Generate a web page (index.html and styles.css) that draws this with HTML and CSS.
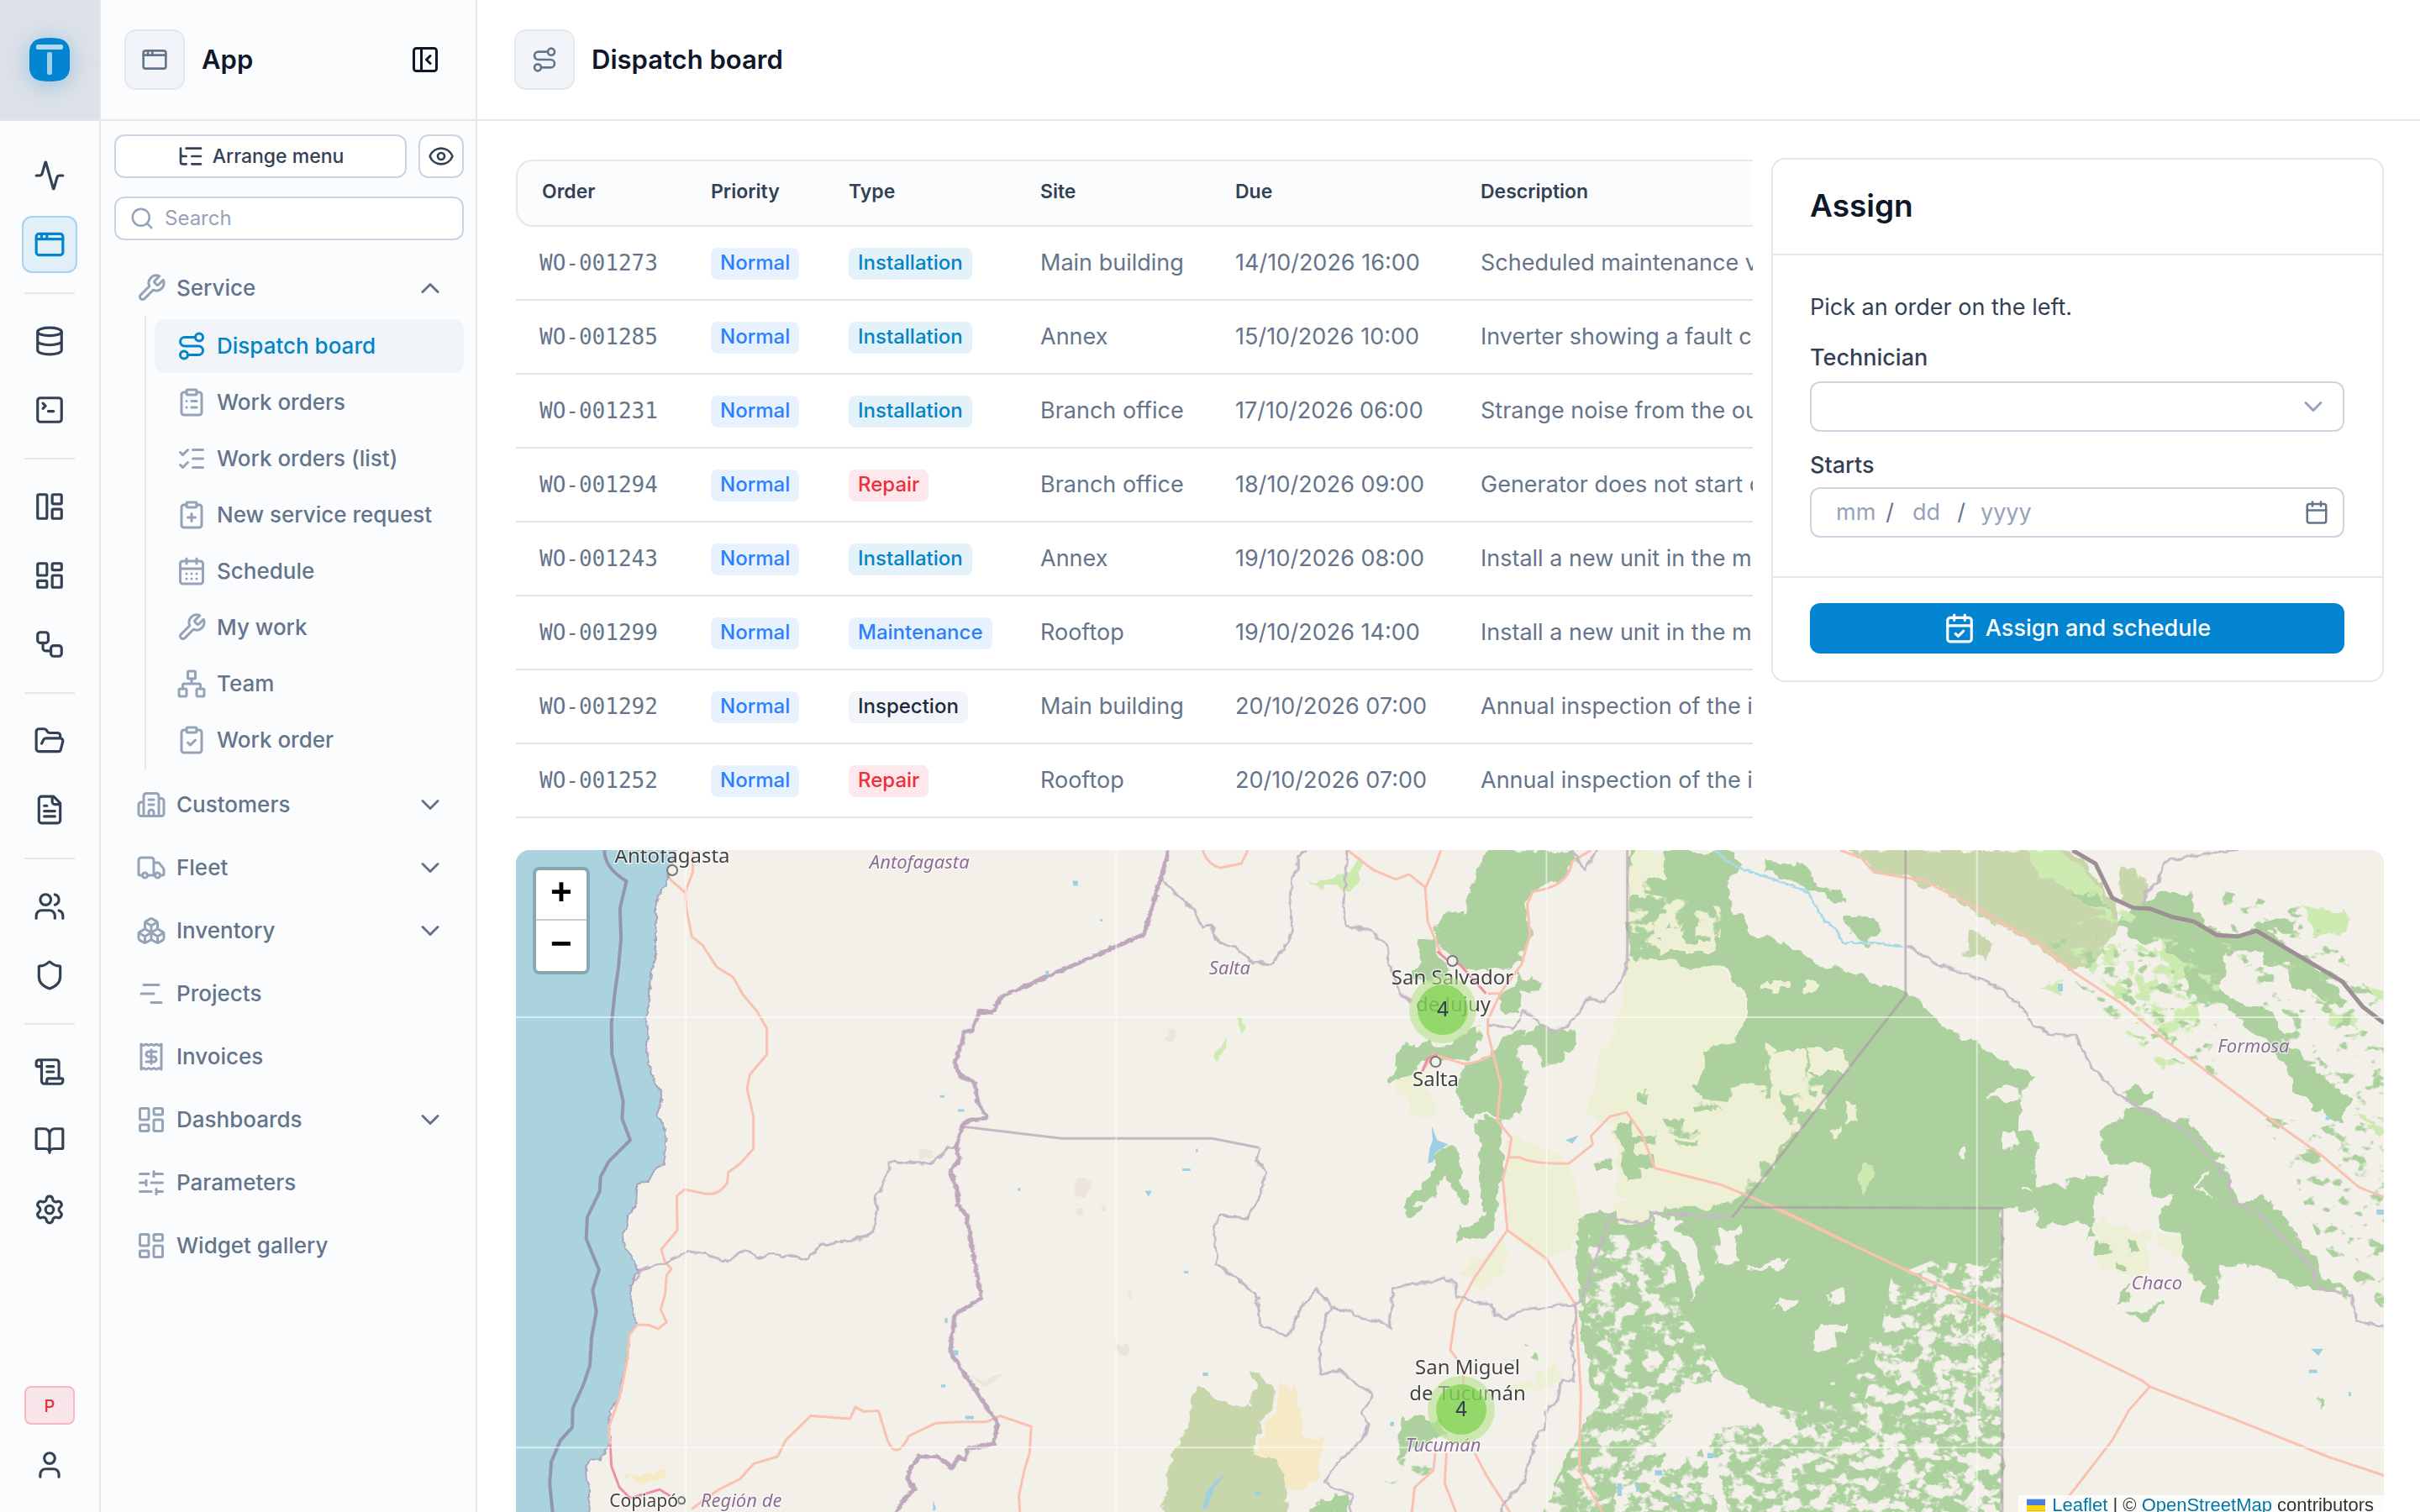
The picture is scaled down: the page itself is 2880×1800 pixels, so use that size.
FILE: index.html
```html
<!DOCTYPE html>
<html lang="en">
<head>
<meta charset="utf-8">
<title>Dispatch board</title>
<link rel="stylesheet" href="styles.css">
</head>
<body>
<svg class="sprite" aria-hidden="true">
  <symbol id="activity" viewBox="0 0 24 24"><path d="M22 12h-2.48a2 2 0 0 0-1.93 1.46l-2.35 8.36a.25.25 0 0 1-.48 0L9.24 2.18a.25.25 0 0 0-.48 0l-2.35 8.36A2 2 0 0 1 4.49 12H2"/></symbol>
  <symbol id="app" viewBox="0 0 24 24"><rect x="2" y="4" width="20" height="16" rx="2"/><path d="M10 4v4M2 8h20M6 4v4"/></symbol>
  <symbol id="database" viewBox="0 0 24 24"><ellipse cx="12" cy="5" rx="9" ry="3"/><path d="M3 5v14a9 3 0 0 0 18 0V5M3 12a9 3 0 0 0 18 0"/></symbol>
  <symbol id="terminal" viewBox="0 0 24 24"><path d="m7 11 2-2-2-2M11 13h4"/><rect x="3" y="3" width="18" height="18" rx="2"/></symbol>
  <symbol id="panels" viewBox="0 0 24 24"><rect x="3" y="3" width="7" height="18" rx="1"/><rect x="14" y="3" width="7" height="7" rx="1"/><rect x="14" y="14" width="7" height="7" rx="1"/></symbol>
  <symbol id="dashboard" viewBox="0 0 24 24"><rect x="3" y="3" width="7" height="9" rx="1"/><rect x="14" y="3" width="7" height="5" rx="1"/><rect x="14" y="12" width="7" height="9" rx="1"/><rect x="3" y="16" width="7" height="5" rx="1"/></symbol>
  <symbol id="workflow" viewBox="0 0 24 24"><rect x="3" y="3" width="8" height="8" rx="2"/><path d="M7 11v4a2 2 0 0 0 2 2h4"/><rect x="13" y="13" width="8" height="8" rx="2"/></symbol>
  <symbol id="folder" viewBox="0 0 24 24"><path d="m6 14 1.500-2.900A2 2 0 0 1 9.240 10H20a2 2 0 0 1 1.940 2.500l-1.540 6a2 2 0 0 1-1.950 1.500H4a2 2 0 0 1-2-2V5a2 2 0 0 1 2-2h3.900a2 2 0 0 1 1.690.9l.81 1.200a2 2 0 0 0 1.670.9H18a2 2 0 0 1 2 2v2"/></symbol>
  <symbol id="file" viewBox="0 0 24 24"><path d="M15 2H6a2 2 0 0 0-2 2v16a2 2 0 0 0 2 2h12a2 2 0 0 0 2-2V7ZM14 2v4a2 2 0 0 0 2 2h4M10 9H8M16 13H8M16 17H8"/></symbol>
  <symbol id="users" viewBox="0 0 24 24"><path d="M16 21v-2a4 4 0 0 0-4-4H6a4 4 0 0 0-4 4v2M22 21v-2a4 4 0 0 0-3-3.870M16 3.130a4 4 0 0 1 0 7.750"/><circle cx="9" cy="7" r="4"/></symbol>
  <symbol id="shield" viewBox="0 0 24 24"><path d="M20 13c0 5-3.500 7.500-7.660 8.950a1 1 0 0 1-.67-.01C7.500 20.500 4 18 4 13V6a1 1 0 0 1 1-1c2 0 4.500-1.200 6.240-2.720a1.170 1.170 0 0 1 1.520 0C14.510 3.810 17 5 19 5a1 1 0 0 1 1 1z"/></symbol>
  <symbol id="scroll" viewBox="0 0 24 24"><path d="M15 12h-5M15 8h-5M19 17V5a2 2 0 0 0-2-2H4M8 21h12a2 2 0 0 0 2-2v-1a1 1 0 0 0-1-1H11a1 1 0 0 0-1 1v1a2 2 0 1 1-4 0V5a2 2 0 1 0-4 0v2a1 1 0 0 0 1 1h3"/></symbol>
  <symbol id="book" viewBox="0 0 24 24"><path d="M12 7v14M3 18a1 1 0 0 1-1-1V4a1 1 0 0 1 1-1h5a4 4 0 0 1 4 4 4 4 0 0 1 4-4h5a1 1 0 0 1 1 1v13a1 1 0 0 1-1 1h-6a3 3 0 0 0-3 3 3 3 0 0 0-3-3z"/></symbol>
  <symbol id="settings" viewBox="0 0 24 24"><path d="M9.671 4.136a2.340 2.340 0 0 1 4.659 0 2.340 2.340 0 0 0 3.319 1.915 2.340 2.340 0 0 1 2.330 4.033 2.340 2.340 0 0 0 0 3.831 2.340 2.340 0 0 1-2.330 4.033 2.340 2.340 0 0 0-3.319 1.915 2.340 2.340 0 0 1-4.659 0 2.340 2.340 0 0 0-3.320-1.915 2.340 2.340 0 0 1-2.330-4.033 2.340 2.340 0 0 0 0-3.831A2.340 2.340 0 0 1 6.350 6.051a2.340 2.340 0 0 0 3.319-1.915"/><circle cx="12" cy="12" r="3"/></symbol>
  <symbol id="user" viewBox="0 0 24 24"><path d="M19 21v-2a4 4 0 0 0-4-4H9a4 4 0 0 0-4 4v2"/><circle cx="12" cy="7" r="4"/></symbol>
  <symbol id="collapse" viewBox="0 0 24 24"><rect x="3" y="3" width="18" height="18" rx="2"/><path d="M9 3v18M16 15l-3-3 3-3"/></symbol>
  <symbol id="tree" viewBox="0 0 24 24"><path d="M8 5h13M13 12h8M13 19h8M3 10a2 2 0 0 0 2 2h3M3 5v12a2 2 0 0 0 2 2h3"/></symbol>
  <symbol id="eye" viewBox="0 0 24 24"><path d="M2.062 12.348a1 1 0 0 1 0-.696 10.750 10.750 0 0 1 19.876 0 1 1 0 0 1 0 .696 10.750 10.750 0 0 1-19.876 0"/><circle cx="12" cy="12" r="3"/></symbol>
  <symbol id="search" viewBox="0 0 24 24"><circle cx="11" cy="11" r="8"/><path d="m21 21-4.300-4.300"/></symbol>
  <symbol id="wrench" viewBox="0 0 24 24"><path d="M14.700 6.300a1 1 0 0 0 0 1.400l1.600 1.600a1 1 0 0 0 1.400 0l3.770-3.770a6 6 0 0 1-7.940 7.940l-6.910 6.910a2.120 2.120 0 0 1-3-3l6.910-6.910a6 6 0 0 1 7.940-7.940l-3.760 3.760z"/></symbol>
  <symbol id="route" viewBox="0 0 24 24"><circle cx="6" cy="19" r="3"/><path d="M9 19h8.500a3.500 3.500 0 0 0 0-7h-11a3.500 3.500 0 0 1 0-7H15"/><circle cx="18" cy="5" r="3"/></symbol>
  <symbol id="clip" viewBox="0 0 24 24"><rect x="8" y="2" width="8" height="4" rx="1"/><path d="M16 4h2a2 2 0 0 1 2 2v14a2 2 0 0 1-2 2H6a2 2 0 0 1-2-2V6a2 2 0 0 1 2-2h2"/></symbol>
  <symbol id="clip-list" viewBox="0 0 24 24"><use href="#clip"/><path d="M12 11h4M12 16h4M8 11h.01M8 16h.01"/></symbol>
  <symbol id="clip-plus" viewBox="0 0 24 24"><use href="#clip"/><path d="M9 14h6M12 17v-6"/></symbol>
  <symbol id="clip-check" viewBox="0 0 24 24"><use href="#clip"/><path d="m9 14 2 2 4-4"/></symbol>
  <symbol id="checks" viewBox="0 0 24 24"><path d="M13 5h8M13 12h8M13 19h8M3 17l2 2 4-4M3 7l2 2 4-4"/></symbol>
  <symbol id="calendar" viewBox="0 0 24 24"><path d="M8 2v4M16 2v4M3 10h18"/><rect x="3" y="4" width="18" height="18" rx="2"/></symbol>
  <symbol id="cal-days" viewBox="0 0 24 24"><use href="#calendar"/><path d="M8 14h.01M12 14h.01M16 14h.01M8 18h.01M12 18h.01M16 18h.01"/></symbol>
  <symbol id="cal-check" viewBox="0 0 24 24"><use href="#calendar"/><path d="m9 16 2 2 4-4"/></symbol>
  <symbol id="network" viewBox="0 0 24 24"><rect x="16" y="16" width="6" height="6" rx="1"/><rect x="2" y="16" width="6" height="6" rx="1"/><rect x="9" y="2" width="6" height="6" rx="1"/><path d="M5 16v-3a1 1 0 0 1 1-1h12a1 1 0 0 1 1 1v3M12 12V8"/></symbol>
  <symbol id="building" viewBox="0 0 24 24"><path d="M10 12h4M10 8h4M14 21v-3a2 2 0 0 0-4 0v3M6 10H4a2 2 0 0 0-2 2v7a2 2 0 0 0 2 2h16a2 2 0 0 0 2-2V9a2 2 0 0 0-2-2h-2M6 21V5a2 2 0 0 1 2-2h8a2 2 0 0 1 2 2v16"/></symbol>
  <symbol id="truck" viewBox="0 0 24 24"><path d="M14 18V6a2 2 0 0 0-2-2H4a2 2 0 0 0-2 2v11a1 1 0 0 0 1 1h2M15 18H9M19 18h2a1 1 0 0 0 1-1v-3.650a1 1 0 0 0-.22-.624l-3.480-4.350A1 1 0 0 0 17.520 8H14"/><circle cx="17" cy="18" r="2"/><circle cx="7" cy="18" r="2"/></symbol>
  <symbol id="boxes" viewBox="0 0 24 24"><path d="M2.970 12.920A2 2 0 0 0 2 14.630v3.240a2 2 0 0 0 .97 1.710l3 1.800a2 2 0 0 0 2.060 0L12 19v-5.500l-5-3-4.030 2.420ZM7 16.500l-4.740-2.850M7 16.500l5-3M7 16.500v5.170M12 13.500V19l3.970 2.380a2 2 0 0 0 2.060 0l3-1.800a2 2 0 0 0 .97-1.710v-3.240a2 2 0 0 0-.97-1.710L17 10.500l-5 3ZM17 16.500l-5-3M17 16.500l4.740-2.850M17 16.500v5.170M7.970 4.420A2 2 0 0 0 7 6.130v4.370l5 3 5-3V6.130a2 2 0 0 0-.97-1.710l-3-1.800a2 2 0 0 0-2.060 0l-3 1.800ZM12 8 7.260 5.150M12 8l4.740-2.850M12 13.500V8"/></symbol>
  <symbol id="gantt" viewBox="0 0 24 24"><path d="M6 5h12M4 12h10M12 19h8"/></symbol>
  <symbol id="receipt" viewBox="0 0 24 24"><path d="M4 2v20l2-1 2 1 2-1 2 1 2-1 2 1 2-1 2 1V2l-2 1-2-1-2 1-2-1-2 1-2-1-2 1ZM16 8h-6a2 2 0 1 0 0 4h4a2 2 0 1 1 0 4H8M12 17.500v-11"/></symbol>
  <symbol id="sliders" viewBox="0 0 24 24"><path d="M10 5H3M12 19H3M14 3v4M16 17v4M21 12h-9M21 19h-5M21 5h-7M8 10v4M8 12H3"/></symbol>
  <symbol id="down" viewBox="0 0 24 24"><path d="m6 9 6 6 6-6"/></symbol>
  <symbol id="up" viewBox="0 0 24 24"><path d="m6 15 6-6 6 6"/></symbol>
</svg>

<div class="shell">
  <nav class="rail" aria-label="Sections">
    <a class="brand" href="#" aria-label="Home">
      <svg viewBox="0 0 48 52" aria-hidden="true"><path class="brand-body" d="M0 14C0 4 8 0 24 0s24 4 24 14v24c0 10-8 14-24 14S0 48 0 38z"/><rect class="brand-bar" x="8" y="8" width="32" height="6" rx="2"/><rect class="brand-stem" x="21" y="17" width="6" height="27" rx="2"/></svg>
    </a>
    <div class="rail-items">
      <a class="rail-link" href="#" aria-label="Activity"><svg class="icon"><use href="#activity"/></svg></a>
      <a class="rail-link active" href="#" aria-label="App"><svg class="icon"><use href="#app"/></svg></a>
      <hr>
      <a class="rail-link" href="#" aria-label="Data"><svg class="icon"><use href="#database"/></svg></a>
      <a class="rail-link" href="#" aria-label="Console"><svg class="icon"><use href="#terminal"/></svg></a>
      <hr>
      <a class="rail-link" href="#" aria-label="Pages"><svg class="icon"><use href="#panels"/></svg></a>
      <a class="rail-link" href="#" aria-label="Dashboards"><svg class="icon"><use href="#dashboard"/></svg></a>
      <a class="rail-link" href="#" aria-label="Workflows"><svg class="icon"><use href="#workflow"/></svg></a>
      <hr>
      <a class="rail-link" href="#" aria-label="Files"><svg class="icon"><use href="#folder"/></svg></a>
      <a class="rail-link" href="#" aria-label="Documents"><svg class="icon"><use href="#file"/></svg></a>
      <hr>
      <a class="rail-link" href="#" aria-label="Users"><svg class="icon"><use href="#users"/></svg></a>
      <a class="rail-link" href="#" aria-label="Security"><svg class="icon"><use href="#shield"/></svg></a>
      <hr>
      <a class="rail-link" href="#" aria-label="Logs"><svg class="icon"><use href="#scroll"/></svg></a>
      <a class="rail-link" href="#" aria-label="Docs"><svg class="icon"><use href="#book"/></svg></a>
      <a class="rail-link" href="#" aria-label="Settings"><svg class="icon"><use href="#settings"/></svg></a>
    </div>
    <div class="rail-foot">
      <span class="env">P</span>
      <a class="rail-link" href="#" aria-label="Account"><svg class="icon"><use href="#user"/></svg></a>
    </div>
  </nav>

  <aside class="sidebar">
    <header class="side-head">
      <span class="tile"><svg class="icon"><use href="#app"/></svg></span>
      <h2>App</h2>
      <button class="bare" type="button" aria-label="Collapse"><svg class="icon"><use href="#collapse"/></svg></button>
    </header>
    <div class="tools">
      <button class="tool wide" type="button"><svg class="icon"><use href="#tree"/></svg>Arrange menu</button>
      <button class="tool" type="button" aria-label="Preview"><svg class="icon"><use href="#eye"/></svg></button>
    </div>
    <label class="search"><svg class="icon"><use href="#search"/></svg><input type="search" placeholder="Search" aria-label="Search"></label>
    <ul class="menu">
      <li><a class="item" href="#"><svg class="icon"><use href="#wrench"/></svg><span>Service</span><svg class="icon chev"><use href="#up"/></svg></a>
        <ul class="submenu">
          <li><a class="item current" href="#"><svg class="icon"><use href="#route"/></svg><span>Dispatch board</span></a></li>
          <li><a class="item" href="#"><svg class="icon"><use href="#clip-list"/></svg><span>Work orders</span></a></li>
          <li><a class="item" href="#"><svg class="icon"><use href="#checks"/></svg><span>Work orders (list)</span></a></li>
          <li><a class="item" href="#"><svg class="icon"><use href="#clip-plus"/></svg><span>New service request</span></a></li>
          <li><a class="item" href="#"><svg class="icon"><use href="#cal-days"/></svg><span>Schedule</span></a></li>
          <li><a class="item" href="#"><svg class="icon"><use href="#wrench"/></svg><span>My work</span></a></li>
          <li><a class="item" href="#"><svg class="icon"><use href="#network"/></svg><span>Team</span></a></li>
          <li><a class="item" href="#"><svg class="icon"><use href="#clip-check"/></svg><span>Work order</span></a></li>
        </ul>
      </li>
      <li><a class="item" href="#"><svg class="icon"><use href="#building"/></svg><span>Customers</span><svg class="icon chev"><use href="#down"/></svg></a></li>
      <li><a class="item" href="#"><svg class="icon"><use href="#truck"/></svg><span>Fleet</span><svg class="icon chev"><use href="#down"/></svg></a></li>
      <li><a class="item" href="#"><svg class="icon"><use href="#boxes"/></svg><span>Inventory</span><svg class="icon chev"><use href="#down"/></svg></a></li>
      <li><a class="item" href="#"><svg class="icon"><use href="#gantt"/></svg><span>Projects</span></a></li>
      <li><a class="item" href="#"><svg class="icon"><use href="#receipt"/></svg><span>Invoices</span></a></li>
      <li><a class="item" href="#"><svg class="icon"><use href="#dashboard"/></svg><span>Dashboards</span><svg class="icon chev"><use href="#down"/></svg></a></li>
      <li><a class="item" href="#"><svg class="icon"><use href="#sliders"/></svg><span>Parameters</span></a></li>
      <li><a class="item" href="#"><svg class="icon"><use href="#dashboard"/></svg><span>Widget gallery</span></a></li>
    </ul>
  </aside>

  <main class="main">
    <header class="page-head">
      <span class="tile"><svg class="icon"><use href="#route"/></svg></span>
      <h1>Dispatch board</h1>
    </header>
    <div class="content">
      <div class="board">
        <div class="orders">
          <table>
            <colgroup><col class="c-order"><col class="c-priority"><col class="c-type"><col class="c-site"><col class="c-due"><col class="c-desc"></colgroup>
            <thead><tr><th>Order</th><th>Priority</th><th>Type</th><th>Site</th><th>Due</th><th>Description</th></tr></thead>
            <tbody>
              <tr><td class="mono">WO-001273</td><td><span class="badge blue">Normal</span></td><td><span class="badge sky">Installation</span></td><td>Main building</td><td>14/10/2026 16:00</td><td>Scheduled maintenance visit for the unit</td></tr>
              <tr><td class="mono">WO-001285</td><td><span class="badge blue">Normal</span></td><td><span class="badge sky">Installation</span></td><td>Annex</td><td>15/10/2026 10:00</td><td>Inverter showing a fault code on the panel</td></tr>
              <tr><td class="mono">WO-001231</td><td><span class="badge blue">Normal</span></td><td><span class="badge sky">Installation</span></td><td>Branch office</td><td>17/10/2026 06:00</td><td>Strange noise from the outdoor unit</td></tr>
              <tr><td class="mono">WO-001294</td><td><span class="badge blue">Normal</span></td><td><span class="badge red">Repair</span></td><td>Branch office</td><td>18/10/2026 09:00</td><td>Generator does not start on demand</td></tr>
              <tr><td class="mono">WO-001243</td><td><span class="badge blue">Normal</span></td><td><span class="badge sky">Installation</span></td><td>Annex</td><td>19/10/2026 08:00</td><td>Install a new unit in the meeting room</td></tr>
              <tr><td class="mono">WO-001299</td><td><span class="badge blue">Normal</span></td><td><span class="badge blue">Maintenance</span></td><td>Rooftop</td><td>19/10/2026 14:00</td><td>Install a new unit in the meeting room</td></tr>
              <tr><td class="mono">WO-001292</td><td><span class="badge blue">Normal</span></td><td><span class="badge gray">Inspection</span></td><td>Main building</td><td>20/10/2026 07:00</td><td>Annual inspection of the installation</td></tr>
              <tr><td class="mono">WO-001252</td><td><span class="badge blue">Normal</span></td><td><span class="badge red">Repair</span></td><td>Rooftop</td><td>20/10/2026 07:00</td><td>Annual inspection of the installation</td></tr>
            </tbody>
          </table>
        </div>
        <form class="card">
          <h2>Assign</h2>
          <div class="card-body">
            <p>Pick an order on the left.</p>
            <label for="tech">Technician</label>
            <div class="field"><select id="tech"><option></option></select><svg class="icon"><use href="#down"/></svg></div>
            <label for="month">Starts</label>
            <div class="field date">
              <input id="month" class="mm" placeholder="mm"><span>/</span><input class="dd" placeholder="dd" aria-label="Day"><span>/</span><input class="yyyy" placeholder="yyyy" aria-label="Year">
              <button class="bare" type="button" aria-label="Open calendar"><svg class="icon"><use href="#calendar"/></svg></button>
            </div>
          </div>
          <div class="card-foot"><button class="primary" type="button"><svg class="icon"><use href="#cal-check"/></svg>Assign and schedule</button></div>
        </form>
      </div>

      <section class="map" aria-label="Map">
        <svg class="tiles" viewBox="614 1012 2222 800" preserveAspectRatio="xMinYMin slice">
          <defs>
            <filter id="ragged" x="0" y="0" width="100%" height="100%"><feTurbulence type="fractalNoise" baseFrequency=".05" numOctaves="3" seed="4"/><feDisplacementMap in="SourceGraphic" scale="20" xChannelSelector="R" yChannelSelector="G"/></filter>
            <filter id="wobble" x="0" y="0" width="100%" height="100%"><feTurbulence type="fractalNoise" baseFrequency=".08" numOctaves="2" seed="9"/><feDisplacementMap in="SourceGraphic" scale="9" xChannelSelector="R" yChannelSelector="G"/></filter>
            <filter id="speckle" x="0" y="0" width="100%" height="100%"><feTurbulence type="fractalNoise" baseFrequency=".05 .06" numOctaves="4" seed="12"/><feColorMatrix values="0 0 0 0 0  0 0 0 0 0  0 0 0 0 0  10 0 0 0 -5"/><feComposite in="SourceGraphic" operator="in"/></filter>
            <filter id="specks" x="0" y="0" width="100%" height="100%"><feTurbulence type="fractalNoise" baseFrequency=".05 .07" numOctaves="3" seed="31"/><feColorMatrix values="0 0 0 0 0  0 0 0 0 0  0 0 0 0 0  0 10 0 0 -6"/><feComposite in="SourceGraphic" operator="in"/></filter>
          </defs>
          <rect class="land" x="614" y="1012" width="2222" height="800"/>
          <g filter="url(#ragged)">
            <rect x="600" y="1000" width="2260" height="830" fill="none"/>
            <g transform="translate(1500 1000) scale(.44643 .5102)">
              <path class="farm" d="M905 500 960 400 975 270 1100 285 1230 300 1290 370 1265 480 1400 560 1405 700 1300 830 1210 860 1060 870 950 830 940 660 870 640ZM650 740 670 690 760 720 830 760 850 840 850 900 830 960 760 980 660 920ZM650 930 530 1010 600 1050 660 980ZM975 24H1078L1070 90 1010 140 980 140ZM365 540 430 550 470 640 420 650 360 590ZM640 1290 780 1230 800 1260 700 1290Z"/>
              <path class="wood" d="M598 24H830L820 75 790 95 720 120 705 160 718 210 700 280 670 300 600 305 540 290 500 260 470 240 468 190 480 175 545 165 575 100 580 60ZM425 235 460 230 470 260 500 300 490 330 400 330 405 300 430 290ZM350 560 360 510 385 465 420 480 450 465 470 490 580 480 560 510 430 520 400 550ZM555 440 580 430 580 480 480 490ZM520 560 545 530 620 500 645 455 715 445 680 490 715 540 710 590 685 640 640 655 600 640 570 655 530 620ZM680 480 740 430 830 440 838 470 810 515 760 525 730 490ZM690 310 755 340 740 360 690 350 690 410 660 415 640 370 690 330ZM570 665 600 648 640 655 645 690 635 830 620 910 580 930 550 920 525 940 530 905 590 880 600 850 580 800 585 700ZM495 710 530 730 535 790 555 850 535 850 515 800 490 780 450 840 410 855 425 870 400 880 382 860 395 835 450 790 470 730ZM370 1350 480 1355 480 1390 440 1410 365 1440ZM130 1568 200 1520 235 1530 240 1568Z"/>
            </g>
            <path class="wood" d="M1937 1012H2062L2071 1031 2055 1052 2062 1087 2090 1112 2130 1125 2166 1148 2215 1161 2268 1181 2300 1213 2378 1262 2423 1283 2405 1297 2403 1346 2421 1347V1410H2458V1402H2510L2503 1421H2494V1457H2420V1438H2382V1812H1830L1850 1760 1902 1663 1884 1602 1879 1551 1875 1510 1879 1444 1987 1439 2060 1435 2085 1400 2130 1355 2110 1270 2105 1310 2020 1320 2030 1250 2065 1240 2080 1190 2055 1155 1937 1138Z"/>
            <path class="farm" d="M1945 1012h35v35h-20v22h-22v-40zM1970 1090h14v12h20v18h30v-8h10l-10 22h-60v-20h-12zM2107 1250h40v50h-40zM2150 1250h46v28h-46zM2094 1171h30v7h-30zM2145 1172h16v8h-16zM2060 1290h40v30h-40zM2140 1300h30v22h-30zM1935 1320h30v16h-30zM1970 1350h40v20h-40zM1920 1430h40v26h-40zM2050 1370h46v20h-46zM2196 1312h14v24h-14zM2180 1340h10v16h-10z"/>
            <g transform="translate(1500 1000) scale(.44643 .5102)">
              <path class="wood" d="M945 660h45v25h60v25h-50v30h60v20h-50v40h-40zM1070 650h60v20h30v18h-70zM1090 700h80v14h-60zM1160 570h40v20h-40zM1000 590h35v20h-35zM890 748h50v18h-50zM1150 620h60v18h-60z"/>
              <path class="ground" d="M1215 915 1240 915 1270 895 1280 990 1213 993ZM1295 997 1415 975 1370 1000ZM1040 870 1095 880 1165 960 1172 1030 1140 1075 1150 1020 1110 960 1040 910ZM1110 1290 1210 1245 1300 1290 1400 1350 1420 1390 1300 1370 1220 1370 1200 1410 1235 1530 1250 1568 1215 1568 1180 1420 1080 1480 1060 1400ZM1380 1075h50v20h-60zM1520 1055h30v30h-30zM1480 1150 1500 1130H1560V1150H1530V1190H1470Z"/>
            </g>
            <g transform="translate(2100 1000) scale(.49745 .5102)">
              <path class="scrub" d="M180 24H735L790 80 830 140 850 200 780 290 730 300 640 240 520 180 430 120 340 90 260 75 230 40ZM490 210 545 235 537 272 480 272ZM850 60 900 80 920 160 850 150Z"/>
              <path class="meadow" d="M615 24H700L760 70 810 120 825 180 740 125 660 80ZM1285 150 1385 170 1395 210 1300 220ZM940 240 1000 250 1010 330 980 320ZM650 340 710 330 700 360ZM1350 405 1415 410 1410 440 1350 430ZM230 750 260 755 245 820 228 820ZM1410 630 1480 680 1470 690ZM810 330 860 340 880 380 840 370Z"/>
              <path class="wood" d="M730 125 800 125 825 165ZM840 200 880 165 950 125H1020L1025 160 1060 205 1130 225 1190 210 1240 250 1290 270 1390 370 1385 390 1330 370 1260 340 1250 290 1200 290 1180 250 1100 260 1090 350 1130 375 1220 405 1230 450 1300 520 1400 605 1385 655 1350 650 1270 590 1250 530 1200 470 1100 390 1010 350 1000 290 940 240 900 240ZM1190 185H1265V215H1190ZM865 620 798 695 830 755 918 757 922 826 972 830 940 875 945 905 992 920 997 970 1010 1010 1045 1035 1042 1078 1083 1080 1088 990 1190 992 1235 1015 1250 1035 1310 1050 1395 1060 1380 1050 1320 1010 1320 965 1285 945 1250 900 1187 825 1140 850 1118 815 1118 780 1070 745 1095 738 1040 680 1000 655 965 660 920 625ZM855 595 890 570 930 590 900 618ZM765 930 790 890V925ZM840 1075 870 1040 880 1075ZM860 1105 930 1090 950 1070 960 1080 910 1120ZM0 50 90 60 130 110 180 120 185 150 140 130 80 100 0 75ZM190 170 250 180 275 205 240 245 190 195Z"/>
              <path class="farm" d="M795 890 870 905 920 915V1005L870 1020 790 990ZM925 920H990L995 960 940 950Z"/>
              <path class="wood" d="M790 940H825V970H790ZM865 935H890V965H865ZM845 985H865V1005H845ZM1325 1295 1340 1320 1328 1330Z"/>
              <path class="ground" d="M528 602 568 570 612 585 610 604ZM567 680 590 678 607 695V712H567ZM458 715 472 712V748H458ZM610 808 640 820 610 822ZM1040 790 1055 760 1045 800 1065 840 1080 850 1050 830Z"/>
            </g>
            <g transform="translate(600 1000) scale(.63776 .5102)">
              <path class="scrub" d="M1285 1290 1305 1283 1335 1302 1365 1327 1395 1310 1397 1240 1425 1260 1437 1290 1425 1330 1395 1430 1440 1440 1465 1520V1590H1228L1240 1450 1270 1380 1275 1310Z"/>
              <path class="sand" d="M1440 1330 1450 1260 1463 1290 1480 1275 1483 1360 1500 1395 1528 1395 1525 1480 1490 1515 1460 1510 1440 1440 1393 1440 1425 1370ZM225 1485 300 1465 305 1490 260 1505Z"/>
              <path class="meadow" d="M1363 415 1382 432 1365 445ZM1320 495 1345 462 1350 480 1332 507ZM1498 100 1552 90 1600 40 1605 60 1568 118Z"/>
              <path class="stone" d="M1230 440h18v30h-18zM780 725h25v18h-25zM1065 795h22v35h-22zM1065 860h15v20h-15zM1110 850h12v20h-12zM1165 1050h12v25h-12zM1140 1175h22v22h-22zM870 1250 930 1255 900 1275Z"/>
            </g>
          </g>
          <path class="ground" filter="url(#speckle)" d="M1890 1470 1985 1470 2000 1560 2040 1620 2060 1660 2210 1700 2235 1600 2250 1520 2300 1500 2382 1510V1812H1830L1902 1663 1884 1602Z"/>
          <path class="ground" filter="url(#specks)" d="M2260 1550 2382 1480V1812H1860L2000 1650 2130 1700Z"/>
          <path class="ground" filter="url(#specks)" d="M2290 1620 2382 1560V1812H2250Z"/>
          <path class="farm" filter="url(#speckle)" d="M1937 1060 2050 1080 2045 1130 1937 1130ZM1960 1300 2120 1320 2110 1400 2060 1430 1970 1400ZM2100 1240 2170 1290 2150 1350 2100 1380Z"/>
          <path class="meadow" filter="url(#specks)" d="M2420 1120 2520 1080 2640 1140 2640 1200 2590 1290 2500 1200ZM2640 1120 2836 1180V1240L2740 1210Z"/>
          <path class="meadow" filter="url(#speckle)" d="M2460 1130 2540 1120 2610 1170 2620 1230 2560 1230Z"/>
          <path class="wood" filter="url(#specks)" d="M2420 1120 2520 1100 2640 1200 2650 1290 2560 1250 2490 1190ZM2640 1060 2740 1080 2836 1200V1560L2760 1480 2720 1380 2690 1330 2810 1340 2700 1240ZM1640 1760 1700 1700 1730 1690 1690 1780ZM1780 1620 1830 1590 1830 1620Z"/>
          <g transform="translate(600 1000) scale(.63776 .5102)">
            <path class="sea" filter="url(#wobble)" d="M0 0H325L312 65 303 100 287 130 282 155 284 180 282 230 283 270 275 300 272 350 265 420 268 460 265 495 272 530 280 565 293 590V610L285 640 297 665 302 690 300 740 297 758 282 765 270 795 248 803 246 855 233 870 230 900 220 920 225 950 240 975 250 1005 240 1025 235 1060 243 1110 248 1130 233 1155 230 1210 222 1250 215 1300 198 1330 195 1380 200 1405 190 1420 180 1445 160 1445 152 1465 158 1510 160 1620H0Z"/>
            <path class="water" d="M1060 95h10v12h-8zM1112 184h4v6h-4zM1010 305h6v8h-6zM846 628h12v6h-12zM813 595h8v6h-8zM1265 766h15v6h-15zM1290 720h4v8h-4zM1195 818h13l-6 14zM958 812h5v6h-5zM1268 1005h8v6h-8zM835 1190h12v12h-12zM822 1115h5v12h-5zM815 1270h8v7h-8zM1303 1242h10v8h-10zM860 1343h16v8h-16zM1310 1520l20-30 15-10-20 30-15 50h-8zM800 1540l6 20-6 5zM1400 1520h12v8h-12z"/>
          </g>
          <g transform="translate(1500 1000) scale(.44643 .5102)">
            <path class="water" d="M455 665 470 700 500 710 465 730 460 750 445 755 450 720 458 700ZM812 700 848 688 830 708ZM1190 1430h22l-6 12h-16zM345 1357h10v10h-10zM950 1500h12v30h-12zM1050 1470h20v12h-20zM1000 1500h8v20h-8zM1105 1530h10v14h-10z"/>
          </g>
          <g transform="translate(2100 1000) scale(.49745 .5102)">
            <path class="water" d="M700 335h12v18h-12zM1305 1187h30l-12 16zM1300 1235h20v8h-20zM1395 1287h6v10h-6zM1340 645h10v8h-10zM1462 862h18v12h-18z"/>
            <path class="river" filter="url(#wobble)" d="M-120 24-90 50-50 70 0 85 100 120 140 185 170 210 185 240 260 240 330 250"/>
          </g>
          <g class="roads">
            <path transform="translate(600 1000) scale(.63776 .5102)" d="M352 24V75L338 120 340 160 350 225 370 245 397 297 427 320 445 360 472 400 490 440V500L458 548 453 580 465 645V720L440 755 418 775 416 800Q400 830 375 825L337 815 322 830 323 910 293 955 300 985 312 1000 303 1015 300 1060 292 1095 303 1125 287 1140 270 1131H248L233 1155 230 1210 215 1300 195 1370 198 1410M308 90 337 122M350 1560 400 1515 440 1490 465 1455 510 1438 525 1400 572 1343 645 1350 655 1322 670 1333 698 1331 715 1400Q732 1450 755 1390L805 1360 850 1357 900 1357 925 1343 983 1368 980 1430 970 1470 960 1530 963 1590M1303 24Q1310 55 1335 65L1375 55 1387 24"/>
            <path transform="translate(1500 1000) scale(.44643 .5102)" d="M232 24 300 70 360 92 395 80 438 110 445 190 480 265M480 24 465 60 440 110M880 24 830 50Q820 110 725 120L710 150 718 220 695 290 640 355 605 420V450L640 570 630 655 668 695 660 740 645 790 657 910 570 1020 520 1100 505 1190 540 1230V1290M657 910 760 975 838 1083 853 1290 848 1470 925 1590M660 740H690Q720 755 820 755L885 710 880 690 930 645 975 635 1015 685 1050 765 1230 805 1380 860 1568 940M430 540 460 500 540 522Q580 520 620 500M605 358H645M465 1430 460 1470 410 1510 400 1590M495 1430 490 1500 530 1590M570 1430 600 1480 680 1590"/>
            <path transform="translate(2100 1000) scale(.49745 .5102)" d="M180 24 230 42 260 75 380 95 500 155 660 245 740 310 850 380 960 470 1070 550 1200 645 1330 735 1420 810 1480 833M0 848 200 940 330 1000 565 1105 700 1165 900 1260 920 1275 1120 1350 1350 1440 1480 1482M920 1275 870 1330 830 1400 727 1530 680 1590"/>
          </g>
          <g class="motorway">
            <path transform="translate(600 1000) scale(.63776 .5102)" d="M198 1410 200 1460 215 1510 235 1535 290 1515 310 1530"/>
            <path transform="translate(1500 1000) scale(.44643 .5102)" d="M470 260 500 282 530 290 600 358M430 540 445 510 470 500"/>
          </g>
          <g class="borders" filter="url(#wobble)">
            <path transform="translate(600 1000) scale(.63776 .5102)" d="M1225 93 1285 160 1303 203 1317 200 1335 240 1365 255 1395 285 1430 290 1452 255 1468 225 1470 205 1465 150 1468 95 1480 70V40L1497 24M1408 717 1403 745 1418 770 1415 815 1388 880 1335 878 1322 900 1330 990 1375 1030 1405 1065 1410 1130 1462 1160 1490 1080 1515 1050 1540 1085 1568 1100M843 715 830 718 805 750 785 755 718 750 713 795 693 830 697 860 687 915 650 935 590 943 568 977 500 965 473 973 453 957 407 983 375 965 345 960 300 985 255 1003 243 1025"/>
            <path transform="translate(1500 1000) scale(.44643 .5102)" d="M232 24 220 150 230 200 290 210 335 240 345 290 370 355 400 375M977 270 970 310 940 355 915 375 870 370 820 435 770 447 700 395 675 440 605 430M823 24 865 70 900 24M185 1085 345 1135 350 1045 420 1035 490 1022 515 1035 525 1065 615 1085 620 1105 655 1115 700 1095 760 1088 840 1083V1120L828 1150 835 1262 800 1260 790 1315 765 1320 755 1380 735 1385 700 1500 660 1530 630 1590M185 1085 160 1160 155 1247 212 1238 295 1293 270 1340 285 1360 270 1400 200 1455 170 1500 240 1525V1590M840 1083 870 1040 930 880 1035 898 1040 870 1258 880"/>
            <path transform="translate(2100 1000) scale(.49745 .5102)" d="M340 245 400 285 450 300 500 320 560 345 600 380 650 435 690 455 745 458 780 530 860 605 930 640 1000 672 1065 740 1110 800 1118 840 1185 875 1240 930 1310 1000 1320 1045 1400 1060 1420 1125 1480 1132M1130 24 985 42 950 55 943 100 908 125 910 150"/>
          </g>
          <path class="border-line" d="M1146 1341 1263 1355H1442L1498 1366M1936 1012V1138M2267 1012V1185L2061 1449M2074 1437 2382 1438V1812"/>
          <path class="frontier" filter="url(#wobble)" transform="translate(600 1000) scale(.63776 .5102)" d="M1240 24 1193 220 928 365 910 402 887 400 873 445 858 445 855 470 840 518 850 548 877 566 883 610 900 648 868 653 855 665 843 715 850 745 832 770 848 830 845 850 862 875 890 1068 840 1108 832 1195 920 1360 913 1408 865 1420 860 1445 848 1440 835 1463 810 1440 775 1437 757 1467 752 1490 765 1513 745 1540 720 1590"/>
          <path class="maritime" transform="translate(600 1000) scale(.63776 .5102)" d="M187 24Q187 65 228 96L216 160 218 230 213 300 207 350 200 430 201 500 210 545 222 610 220 650 235 700 195 750 180 785 178 820 155 880 153 930 177 1003 165 1050 172 1100 163 1160 160 1225 148 1270 128 1325 127 1370 105 1400 88 1450 85 1500 92 1590"/>
          <path class="frontier dark" transform="translate(2100 1000) scale(.49745 .5102)" d="M735 24 790 55 830 135 880 158 920 160 975 180 1025 190 1080 222 1130 225 1175 212 1380 330 1430 390 1480 427"/>
          <path class="seams" d="M816 1012V1812M1328 1012V1812M1840 1012V1812M2352 1012V1812M614 1211H2836M614 1723H2836"/>
          <g class="towns"><circle cx="800" cy="1036" r="6"/><circle cx="1728" cy="1144" r="6"/><circle cx="1708" cy="1264" r="6"/><circle cx="811" cy="1786" r="4"/></g>
          <g class="cities">
            <text x="800" y="1027">Antofagasta</text><text x="1728" y="1172">San Salvador</text><text x="1729" y="1204">de Jujuy</text><text x="1708" y="1293">Salta</text><text x="1746" y="1636">San Miguel</text><text x="1746" y="1667">de Tucumán</text><text class="small" x="766" y="1794">Copiapó</text>
          </g>
          <g class="regions">
            <text x="1094" y="1034">Antofagasta</text><text x="1463" y="1160">Salta</text><text x="2681" y="1253">Formosa</text><text x="2566" y="1535">Chaco</text><text x="1717" y="1728">Tucumán</text><text x="882" y="1794">Región de</text>
          </g>
        </svg>
        <button class="cluster jujuy" type="button">4</button>
        <button class="cluster tucuman" type="button">4</button>
        <div class="zoom"><button type="button" aria-label="Zoom in">+</button><button type="button" aria-label="Zoom out">−</button></div>
        <div class="credit"><svg viewBox="0 0 12 8" aria-hidden="true"><path fill="#4c7be1" d="M0 0h12v4H0z"/><path fill="#ffd500" d="M0 4h12v3H0z"/><path fill="#e0bc00" d="M0 7h12v1H0z"/></svg><span><a href="#">Leaflet</a> | © <a href="#">OpenStreetMap</a> contributors</span></div>
      </section>
    </div>
  </main>
</div>
</body>
</html>
```
FILE: styles.css
```css
* { box-sizing: border-box; }

body {
  margin: 0;
  font: 400 27px/40px Inter, "Liberation Sans", sans-serif;
  color: #334155;
  background: #fff;
}

h1, h2, p, ul { margin: 0; padding: 0; }
ul { list-style: none; }
a { color: inherit; text-decoration: none; }
button, input, select { font: inherit; color: inherit; }

.sprite { display: none; }

.icon {
  display: block;
  flex: none;
  width: 36px;
  height: 36px;
  fill: none;
  stroke: currentColor;
  stroke-width: 2;
  stroke-linecap: round;
  stroke-linejoin: round;
}

.bare {
  display: flex;
  padding: 0;
  border: 0;
  background: none;
}

.shell {
  display: flex;
  height: 100vh;
  overflow: hidden;
}

/* Icon rail */
.rail {
  display: flex;
  flex: none;
  flex-direction: column;
  width: 120px;
  background: #fafcfe;
  border-right: 2px solid #e5e7eb;
}

.brand {
  display: flex;
  align-items: center;
  justify-content: center;
  height: 144px;
  background: #dee2e8;
  border-bottom: 2px solid #e2e5ea;
}

.brand svg {
  width: 48px;
  height: 52px;
  border-radius: 16px;
  box-shadow: 0 4px 28px rgba(2, 132, 208, .35);
}
.brand-body { fill: #0284d0; }
.brand-bar { fill: #b4d8f0; }
.brand-stem { fill: #9fd0ee; }

.rail-items {
  display: flex;
  flex: 1;
  flex-direction: column;
  align-items: center;
  gap: 14px;
  padding-top: 31px;
}

.rail-link {
  display: flex;
  align-items: center;
  justify-content: center;
  width: 66px;
  height: 68px;
  border: 2px solid transparent;
  border-radius: 12px;
}
.rail-link .icon { width: 38px; height: 38px; }
.rail-link.active {
  color: #0284d0;
  background: #e1eff8;
  border-color: #a8d3ee;
}

.rail hr {
  width: 60px;
  height: 2px;
  margin: 9px 0 8px;
  border: 0;
  background: #e5e7eb;
}

.rail-foot {
  display: flex;
  flex-direction: column;
  align-items: center;
  gap: 14px;
  padding-bottom: 22px;
}

.env {
  width: 60px;
  height: 46px;
  border: 2px solid #f9b8bd;
  border-radius: 8px;
  background: #f8e5e9;
  color: #e0323c;
  font-size: 20px;
  font-weight: 500;
  line-height: 44px;
  text-align: center;
}

/* Sidebar */
.sidebar {
  flex: none;
  width: 448px;
  background: #fafcfe;
  border-right: 2px solid #e5e7eb;
}

.side-head, .page-head {
  display: flex;
  align-items: center;
  height: 144px;
  border-bottom: 2px solid #e5e7eb;
  color: #0f172a;
}
.side-head { gap: 20px; padding: 0 42px 0 28px; }
.side-head h2 { flex: 1; }
.side-head h2, .page-head h1 { font-size: 31px; font-weight: 600; }

.tile {
  display: grid;
  place-items: center;
  width: 72px;
  height: 72px;
  border: 2px solid #e5e7eb;
  border-radius: 14px;
  background: #f1f5f9;
  color: #64748b;
}
.tile .icon { width: 32px; height: 32px; }

.tools { display: flex; gap: 14px; padding: 16px 14px 0 16px; }
.tool {
  display: flex;
  align-items: center;
  justify-content: center;
  gap: 10px;
  width: 54px;
  height: 52px;
  padding: 0;
  border: 2px solid #cbd5e1;
  border-radius: 12px;
  background: #fff;
  font-size: 23px;
  font-weight: 500;
}
.tool .icon { width: 32px; height: 32px; }
.tool.wide { flex: 1; }

.search {
  display: flex;
  align-items: center;
  gap: 12px;
  height: 52px;
  margin: 22px 14px 0 16px;
  padding: 0 16px;
  border: 2px solid #cbd5e1;
  border-radius: 12px;
  background: #fff;
  color: #94a3b8;
}
.search .icon { width: 30px; height: 30px; }
.search input {
  flex: 1;
  min-width: 0;
  padding: 0;
  border: 0;
  outline: 0;
  background: none;
  font-size: 24px;
}
input::placeholder { color: #94a3b8; opacity: 1; }

.menu {
  display: flex;
  flex-direction: column;
  gap: 9px;
  padding: 24px 14px 0;
}

.item {
  display: flex;
  align-items: center;
  gap: 12px;
  height: 66px;
  padding: 0 22px 0 28px;
  border-radius: 12px;
  color: #64748b;
  font-size: 26px;
  font-weight: 500;
}
.item span { flex: 1; overflow: hidden; white-space: nowrap; }
.item .icon { color: #94a3b8; }
.item .chev { color: #64748b; }

.submenu {
  display: flex;
  flex-direction: column;
  gap: 3px;
  margin-left: 38px;
  padding: 4px 0 3px 10px;
  border-left: 2px solid #e5e7eb;
}
.submenu .item { height: 64px; padding: 0 30px 0 26px; }
.item.current { background: #f1f5f9; color: #0284c7; }
.item.current .icon { color: #0284c7; }

/* Page */
.main {
  flex: 1;
  min-width: 0;
  overflow-y: auto;
  scrollbar-width: none;
}

.page-head { gap: 20px; padding: 0 44px; }

.content { padding: 44px 43px 0 46px; }

.board {
  display: grid;
  grid-template-columns: minmax(0, 1fr) 729px;
  align-items: start;
  gap: 22px;
}

.orders { padding-top: 2px; overflow: hidden; }

table {
  width: 1700px;
  table-layout: fixed;
  border-collapse: separate;
  border-spacing: 0;
}
.c-order { width: 202px; }
.c-priority { width: 164px; }
.c-type { width: 228px; }
.c-site { width: 232px; }
.c-due { width: 292px; }

th, td { padding: 0 0 0 30px; text-align: left; white-space: nowrap; }
th {
  height: 80px;
  padding-bottom: 4px;
  border: solid #e5e7eb;
  border-width: 2px 0;
  background: #fafcfe;
  font-size: 23px;
  font-weight: 600;
}
th:first-child { border-left-width: 2px; border-radius: 20px 0 0 20px; padding-left: 29px; }
td {
  height: 88px;
  border-bottom: 2px solid #e2e4ec;
  color: #64748b;
}
.mono { padding-left: 28px; font-family: "DejaVu Sans Mono", monospace; font-size: 26px; }

.badge {
  display: inline-block;
  height: 38px;
  padding: 0 11px;
  border-radius: 8px;
  font-size: 24px;
  font-weight: 500;
  line-height: 36px;
  vertical-align: middle;
}
.blue { background: #e8f2ff; color: #2b7fff; }
.sky { background: #e3f1f9; color: #0284c7; }
.red { background: #ffe8eb; color: #ed2f3b; }
.gray { background: #f1f5f9; color: #1e293b; }

/* Assign card */
.card {
  border: 2px solid #e5e7eb;
  border-radius: 16px;
}
.card h2 {
  height: 114px;
  padding: 0 44px;
  border-bottom: 2px solid #e5e7eb;
  color: #0f172a;
  font-size: 37px;
  font-weight: 600;
  line-height: 110px;
}
.card-body {
  display: flex;
  flex-direction: column;
  padding: 42px 45px 46px 44px;
}
.card-body p { margin-bottom: 20px; }
.card-body label { margin-bottom: 8px; font-weight: 500; }
.field {
  display: flex;
  align-items: center;
  position: relative;
  height: 60px;
  border: 2px solid #cbd5e1;
  border-radius: 12px;
}
.field + label { margin-top: 20px; margin-bottom: 6px; }
.field select {
  flex: 1;
  align-self: stretch;
  padding: 0 30px;
  border: 0;
  outline: 0;
  border-radius: 12px;
  background: none;
  appearance: none;
}
.field > .icon {
  position: absolute;
  right: 17px;
  color: #94a3b8;
  pointer-events: none;
}
.date { padding: 0 16px 0 29px; color: #64748b; }
.date input { min-width: 0; padding: 0; border: 0; outline: 0; background: none; }
.date span { width: 10px; text-align: center; }
.date .mm { width: 59px; }
.date .dd { width: 75px; padding-left: 22px; }
.date .yyyy { flex: 1; padding-left: 18px; }
.date .icon { width: 30px; height: 30px; }

.card-foot { padding: 30px 45px 32px 44px; border-top: 2px solid #e5e7eb; }
.primary {
  display: flex;
  align-items: center;
  justify-content: center;
  gap: 12px;
  width: 100%;
  height: 60px;
  border: 0;
  border-radius: 12px;
  background: #0284d0;
  color: #fff;
  font-weight: 500;
}
.primary .icon { width: 38px; height: 38px; }

/* Map */
.map {
  position: relative;
  height: 800px;
  margin-top: 38px;
  overflow: hidden;
  border-radius: 16px;
  background: #f2efe9;
}
.tiles { display: block; width: 100%; height: 100%; }
.tiles path { vector-effect: non-scaling-stroke; }
.land, .ground { fill: #f3f0ea; }
.sea { fill: #aad3dd; stroke: #a9a5bd; stroke-width: 2; }
.water { fill: #9ed0e2; }
.wood { fill: #add19e; }
.scrub { fill: #c8d7ab; }
.meadow { fill: #cdebb0; }
.farm { fill: #eef0d5; }
.sand { fill: #f5e9c6; }
.stone { fill: #ebe5dc; }
.river, .roads, .motorway, .borders, .border-line, .frontier, .maritime, .seams { fill: none; stroke-linejoin: round; }
.river { stroke: #aad9e8; stroke-width: 3; }
.roads { stroke: #fac1b0; stroke-width: 3; }
.motorway { stroke: #ee8fa5; stroke-width: 3; }
.borders, .border-line { stroke: #c5b8c6; stroke-width: 3; }
.border-line { stroke: #a893a6; stroke-opacity: .6; }
.frontier { stroke: #bda9bb; stroke-width: 5; }
.frontier.dark { stroke: #9c8f95; }
.maritime { stroke: #9396af; stroke-width: 4; }
.seams { stroke: #fff; stroke-opacity: .55; stroke-width: 2; }
.towns { fill: #f3f0ea; stroke: #777; stroke-width: 2; }
.cities, .regions {
  font-family: "Noto Sans", sans-serif;
  font-size: 24px;
  text-anchor: middle;
  paint-order: stroke;
  stroke: rgba(255, 255, 255, .6);
  stroke-width: 3px;
}
.cities { fill: #444; }
.small { font-size: 21px; }
.regions { fill: #8d6e94; font-size: 22px; font-style: italic; }

.cluster {
  position: absolute;
  width: 80px;
  height: 80px;
  padding: 0;
  border: 10px solid transparent;
  border-radius: 50%;
  background:
    linear-gradient(rgba(110, 204, 57, .6), rgba(110, 204, 57, .6)) padding-box,
    linear-gradient(rgba(181, 226, 140, .6), rgba(181, 226, 140, .6)) border-box;
  font-size: 24px;
  line-height: 60px;
}
.jujuy { left: 1063px; top: 150px; }
.tucuman { left: 1085px; top: 626px; }

.zoom {
  position: absolute;
  left: 20px;
  top: 20px;
  width: 68px;
  border: 4px solid rgba(0, 0, 0, .2);
  border-radius: 8px;
  background: #fff padding-box;
}
.zoom button {
  display: block;
  width: 60px;
  height: 60px;
  padding: 0;
  border: 0;
  background: none;
  color: #000;
  font: bold 44px/56px "Liberation Mono", monospace;
}
.zoom button:first-child { border-bottom: 2px solid #ccc; }

.credit {
  position: absolute;
  right: 0;
  bottom: 0;
  display: flex;
  align-items: center;
  gap: 8px;
  height: 32px;
  padding: 0 12px 8px 10px;
  background: rgba(255, 255, 255, .8);
  color: #333;
  font: 22px/24px "Liberation Sans", Arial, sans-serif;
}
.credit svg { width: 22px; height: 16px; }
.credit a { color: #0078a8; }
```
